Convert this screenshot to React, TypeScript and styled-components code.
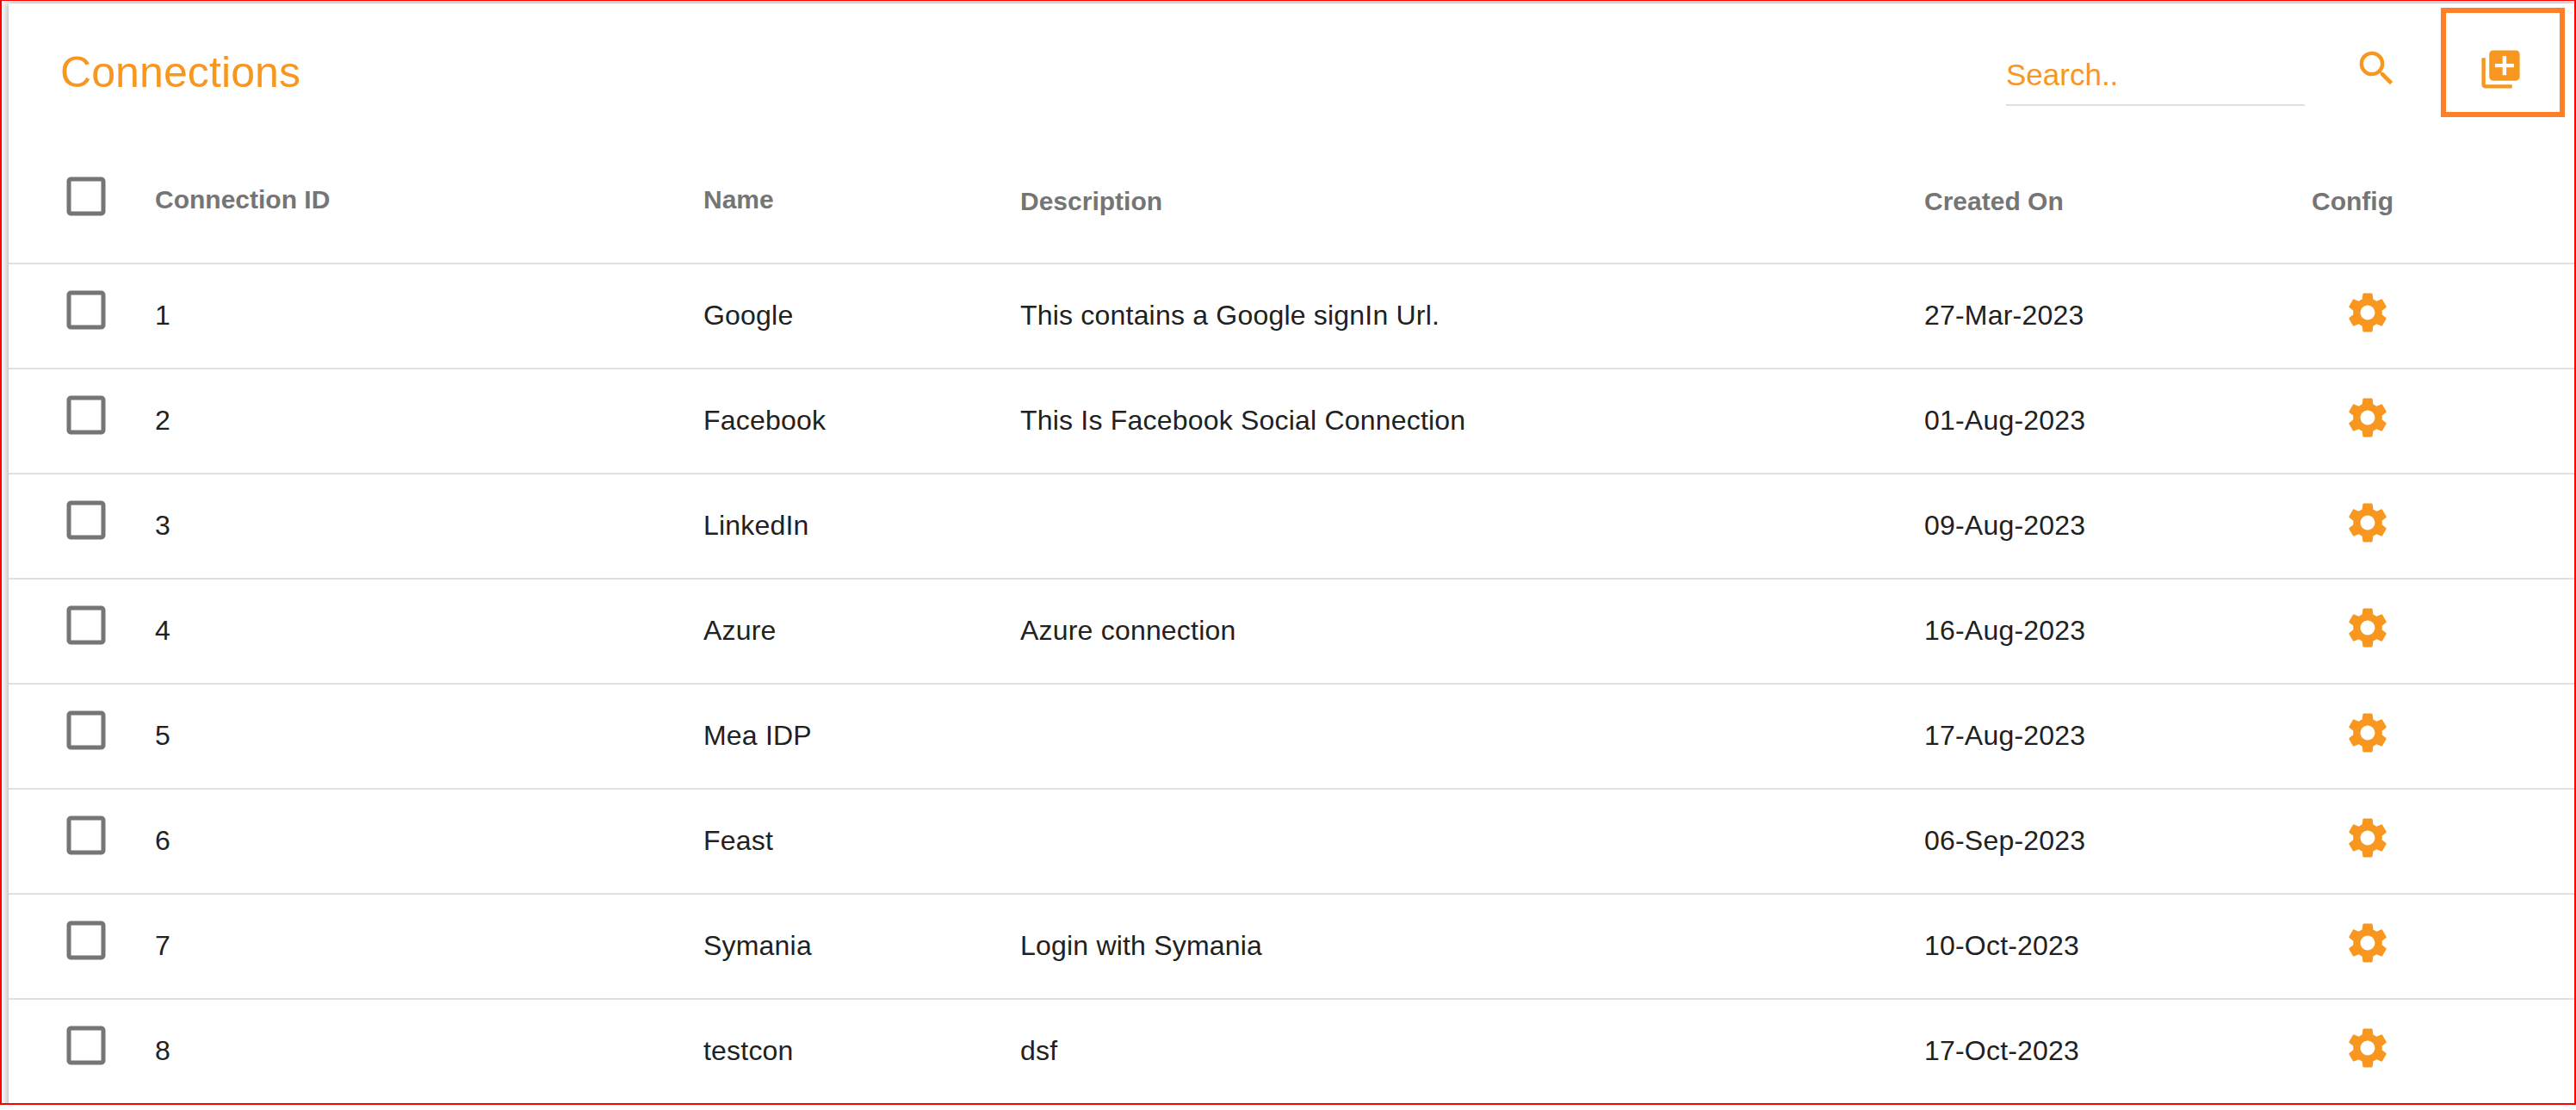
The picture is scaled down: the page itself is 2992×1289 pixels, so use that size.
import React from 'react';
import styled, { createGlobalStyle } from 'styled-components';
import { MdCheckBoxOutlineBlank, MdLibraryAdd, MdSearch, MdSettings } from 'react-icons/md';

const ORANGE = '#f8971f';
const COLUMNS = '170px 637px 368px 1050px 450px 1fr';

const Global = createGlobalStyle`
  html, body { margin: 0; padding: 0; background: #fff; }
  body { font-family: "Liberation Sans", Arial, sans-serif; }
`;

const Frame = styled.div`
  position: relative;
  box-sizing: border-box;
  width: 2992px;
  height: 1283px;
  overflow: hidden;
  background: #f4f4f4;
  border-style: solid;
  border-color: #ff0000;
  border-width: 1px 2px 2px 2px;
`;

const Paper = styled.main`
  margin: 3px 0 0 8px;
  height: 1400px;
  background: #fff;
  box-shadow: 0 0 8px rgba(0, 0, 0, 0.35);
`;

const Toolbar = styled.header`
  display: flex;
  align-items: center;
  height: 146px;
  padding: 0 59px 0 60px;
`;

const Title = styled.h1`
  flex: 1;
  margin: 14px 0 0;
  font-size: 50px;
  line-height: 58px;
  font-weight: 400;
  letter-spacing: 0.1px;
  color: ${ORANGE};
`;

const SearchInput = styled.input`
  box-sizing: border-box;
  width: 347px;
  height: 71px;
  margin-top: 21px;
  padding: 0;
  border: 0;
  border-bottom: 2px solid #e0e0e0;
  outline: none;
  background: transparent;
  font-family: inherit;
  font-size: 35px;
  color: ${ORANGE};
  &::placeholder { color: ${ORANGE}; opacity: 1; }
`;

const IconButton = styled.button<{ $left: number; $top: number }>`
  display: flex;
  padding: 0;
  border: 0;
  background: none;
  color: ${ORANGE};
  margin-left: ${(p) => p.$left}px;
  margin-top: ${(p) => p.$top}px;
`;

const Highlight = styled.div`
  position: absolute;
  left: 2833px;
  top: 8px;
  width: 144px;
  height: 127px;
  box-sizing: border-box;
  border: 6px solid #ff7f27;
  pointer-events: none;
`;

const Row = styled.div<{ $head?: boolean }>`
  display: grid;
  grid-template-columns: ${COLUMNS};
  align-items: center;
  box-sizing: border-box;
  height: ${(p) => (p.$head ? 157 : 122)}px;
  border-bottom: 2px solid #e0e0e0;
`;

const CheckCell = styled.div<{ $lift: number }>`
  display: flex;
  padding-left: 60px;
  padding-bottom: ${(p) => p.$lift}px;
  color: #757575;
`;

const HeadCell = styled.div<{ $drop: number }>`
  font-size: 30px;
  line-height: 36px;
  font-weight: 700;
  color: #757575;
  padding-top: ${(p) => p.$drop}px;
`;

const Cell = styled.div`
  font-size: 32px;
  line-height: 38px;
  letter-spacing: 0.2px;
  color: #212121;
  padding-bottom: 2px;
`;

const GearCell = styled.div`
  display: flex;
  padding-left: 37px;
  padding-bottom: 8px;
  color: ${ORANGE};
`;

const rows = [
  ['1', 'Google', 'This contains a Google signIn Url.', '27-Mar-2023'],
  ['2', 'Facebook', 'This Is Facebook Social Connection', '01-Aug-2023'],
  ['3', 'LinkedIn', '', '09-Aug-2023'],
  ['4', 'Azure', 'Azure connection', '16-Aug-2023'],
  ['5', 'Mea IDP', '', '17-Aug-2023'],
  ['6', 'Feast', '', '06-Sep-2023'],
  ['7', 'Symania', 'Login with Symania', '10-Oct-2023'],
  ['8', 'testcon', 'dsf', '17-Oct-2023'],
];

export default function App() {
  return (
    <Frame>
      <Global />
      <Paper>
        <Toolbar>
          <Title>Connections</Title>
          <SearchInput placeholder="Search.." />
          <IconButton $left={57} $top={5} aria-label="Search">
            <MdSearch size={53} />
          </IconButton>
          <IconButton $left={91} $top={7} aria-label="Add connection">
            <MdLibraryAdd size={53} />
          </IconButton>
        </Toolbar>
        <Row $head>
          <CheckCell $lift={0}>
            <MdCheckBoxOutlineBlank size={60} />
          </CheckCell>
          <HeadCell $drop={9}>Connection ID</HeadCell>
          <HeadCell $drop={9}>Name</HeadCell>
          <HeadCell $drop={12}>Description</HeadCell>
          <HeadCell $drop={12}>Created On</HeadCell>
          <HeadCell $drop={12}>Config</HeadCell>
        </Row>
        {rows.map(([id, name, description, created]) => (
          <Row key={id}>
            <CheckCell $lift={14}>
              <MdCheckBoxOutlineBlank size={60} />
            </CheckCell>
            <Cell>{id}</Cell>
            <Cell>{name}</Cell>
            <Cell>{description}</Cell>
            <Cell>{created}</Cell>
            <GearCell>
              <MdSettings size={56} />
            </GearCell>
          </Row>
        ))}
      </Paper>
      <Highlight />
    </Frame>
  );
}
